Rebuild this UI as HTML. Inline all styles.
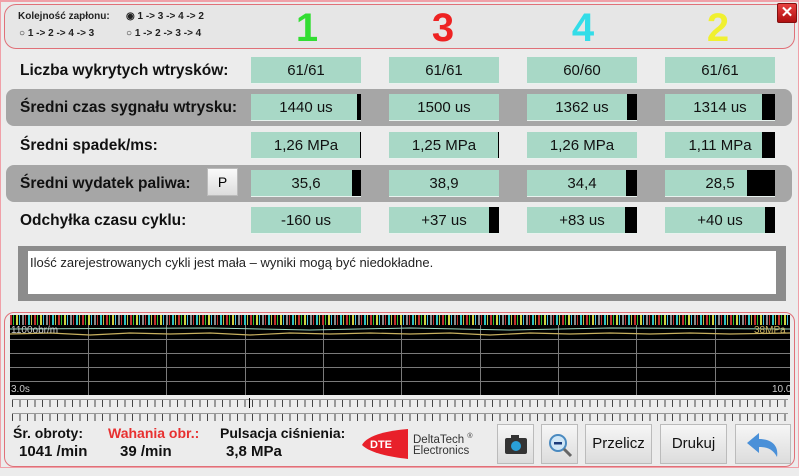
<!DOCTYPE html>
<html><head><meta charset="utf-8"><style>
*{box-sizing:border-box;margin:0;padding:0}
body{width:799px;height:468px;background:#ececec;font-family:"Liberation Sans",sans-serif;position:relative;overflow:hidden}
.a{position:absolute}
.lab{position:absolute;left:20px;font-weight:bold;font-size:15.5px;color:#111;font-family:"Liberation Sans",sans-serif}
.band{position:absolute;left:6px;width:786px;background:#a6a6a6;border-radius:8px}
.box{position:absolute;width:110px;height:27px;background:#a8d8c6;border-bottom:1px solid #e8f2ee;font-size:15px;color:#111;font-family:"Liberation Sans",sans-serif}
.box span{position:absolute;top:5px;left:0;right:0;text-align:center}
.box i{position:absolute;right:0;top:0;bottom:0;background:#000}
.dig{position:absolute;top:6px;font-size:40px;font-weight:bold;font-family:"Liberation Sans",sans-serif;width:40px;text-align:center}
.btn{position:absolute;top:424px;height:40px;background:linear-gradient(#f6f6f6,#dcdcdc);border:1px solid #bbb;font-size:15px;text-align:center;line-height:38px;color:#111;font-family:"Liberation Sans",sans-serif}
.tk{position:absolute;left:12px;width:776px;height:8px;background:repeating-linear-gradient(90deg,#444 0,#444 1px,transparent 1px,transparent 7.5px);border-top:1px solid #999}
.r{position:absolute;font-size:10px;font-weight:bold;color:#222}
</style></head><body>
<div class="a" style="left:0;top:0;width:799px;height:468px;border:1px solid #f0a0a8;border-top:2px solid #f0a0a8"></div>
<div class="a" style="left:4px;top:4px;width:791px;height:45px;border:1px solid #e07078;border-radius:12px;background:#e6e6e6"></div>
<div class="r" style="left:18px;top:11px">Kolejność zapłonu:</div>
<div class="r" style="left:126px;top:11px">◉ 1 -&gt; 3 -&gt; 4 -&gt; 2</div>
<div class="r" style="left:19px;top:28px">○ 1 -&gt; 2 -&gt; 4 -&gt; 3</div>
<div class="r" style="left:126px;top:28px">○ 1 -&gt; 2 -&gt; 3 -&gt; 4</div>
<div class="dig" style="left:287px;color:#33dd33">1</div>
<div class="dig" style="left:423px;color:#ee2222">3</div>
<div class="dig" style="left:563px;color:#33dde8">4</div>
<div class="dig" style="left:698px;color:#f0f030">2</div>
<div class="a" style="left:777px;top:3px;width:20px;height:20px;background:linear-gradient(#e84040,#b01010);border:1px solid #801010;border-radius:2px;color:#fff;font-weight:bold;font-size:15px;text-align:center;line-height:18px">✕</div>

<div class="band" style="top:89px;height:37px"></div>
<div class="band" style="top:165px;height:37px"></div>
<div class="lab" style="top:62px">Liczba wykrytych wtrysków:</div>
<div class="lab" style="top:99px">Średni czas sygnału wtrysku:</div>
<div class="lab" style="top:137px">Średni spadek/ms:</div>
<div class="lab" style="top:175px">Średni wydatek paliwa:</div>
<div class="lab" style="top:212px">Odchyłka czasu cyklu:</div>
<div class="a" style="left:207px;top:168px;width:31px;height:28px;background:linear-gradient(#fafafa,#ddd);border:1px solid #bbb;text-align:center;line-height:26px;font-size:14px">P</div>

<div class="box" style="left:251px;top:57px"><span>61/61</span></div>
<div class="box" style="left:389px;top:57px"><span>61/61</span></div>
<div class="box" style="left:527px;top:57px"><span>60/60</span></div>
<div class="box" style="left:665px;top:57px"><span>61/61</span></div>

<div class="box" style="left:251px;top:94px"><span>1440 us</span><i style="width:4px"></i></div>
<div class="box" style="left:389px;top:94px"><span>1500 us</span></div>
<div class="box" style="left:527px;top:94px"><span>1362 us</span><i style="width:10px"></i></div>
<div class="box" style="left:665px;top:94px"><span>1314 us</span><i style="width:13px"></i></div>

<div class="box" style="left:251px;top:132px"><span>1,26 MPa</span><i style="width:1px"></i></div>
<div class="box" style="left:389px;top:132px"><span>1,25 MPa</span><i style="width:1px"></i></div>
<div class="box" style="left:527px;top:132px"><span>1,26 MPa</span></div>
<div class="box" style="left:665px;top:132px"><span>1,11 MPa</span><i style="width:13px"></i></div>

<div class="box" style="left:251px;top:170px"><span>35,6</span><i style="width:9px"></i></div>
<div class="box" style="left:389px;top:170px"><span>38,9</span></div>
<div class="box" style="left:527px;top:170px"><span>34,4</span><i style="width:11px"></i></div>
<div class="box" style="left:665px;top:170px"><span>28,5</span><i style="width:28px"></i></div>

<div class="box" style="left:251px;top:207px"><span>-160 us</span></div>
<div class="box" style="left:389px;top:207px"><span>+37 us</span><i style="width:10px"></i></div>
<div class="box" style="left:527px;top:207px"><span>+83 us</span><i style="width:12px"></i></div>
<div class="box" style="left:665px;top:207px"><span>+40 us</span><i style="width:10px"></i></div>

<div class="a" style="left:18px;top:246px;width:768px;height:55px;background:#8c8c8c"></div>
<div class="a" style="left:28px;top:251px;width:748px;height:43px;background:#fff;font-size:13px;padding:4px 2px;color:#222">Ilość zarejestrowanych cykli jest mała – wyniki mogą być niedokładne.</div>

<div class="a" style="left:4px;top:312px;width:791px;height:155px;border:1px solid #e07078;border-radius:10px"></div>
<svg class="a" style="left:10px;top:315px" width="780" height="80">
<defs><pattern id="p" width="24" height="10" patternUnits="userSpaceOnUse">
<rect x="0" width="2" height="10" fill="#c03030"/><rect x="3" width="1" height="10" fill="#30c030"/><rect x="6" width="2" height="10" fill="#d0d040"/><rect x="9" width="1" height="10" fill="#40c0e0"/><rect x="12" width="2" height="10" fill="#888"/><rect x="15" width="1" height="10" fill="#c03030"/><rect x="18" width="2" height="10" fill="#30c0c0"/><rect x="21" width="1" height="10" fill="#c0c040"/></pattern></defs>
<rect width="780" height="80" fill="#000"/>
<rect width="780" height="10" fill="url(#p)"/>
<g stroke="#7a7a7a" stroke-width="1">
<line x1="0" y1="24.5" x2="780" y2="24.5"/><line x1="0" y1="38.5" x2="780" y2="38.5"/><line x1="0" y1="52.5" x2="780" y2="52.5"/><line x1="0" y1="66.5" x2="780" y2="66.5"/>
<line x1="78.5" y1="10" x2="78.5" y2="80"/><line x1="156.5" y1="10" x2="156.5" y2="80"/><line x1="235.5" y1="10" x2="235.5" y2="80"/><line x1="313.5" y1="10" x2="313.5" y2="80"/><line x1="391.5" y1="10" x2="391.5" y2="80"/><line x1="470.5" y1="10" x2="470.5" y2="80"/><line x1="548.5" y1="10" x2="548.5" y2="80"/><line x1="626.5" y1="10" x2="626.5" y2="80"/><line x1="705.5" y1="10" x2="705.5" y2="80"/></g>
<polyline points="0,14 200,13 300,15 400,13 500,15 600,13 780,14" fill="none" stroke="#9fd8c0" stroke-width="1"/>
<polyline points="0,19 40,18 80,20 120,18 160,19 200,18 240,20 280,18 320,19 360,18 400,19 440,18 480,20 520,18 560,19 600,18 640,19 680,18 720,19 780,18" fill="none" stroke="#c8b060" stroke-width="1.2"/>
<text x="1" y="18" fill="#ccc" font-size="10" font-family="Liberation Sans">1100obr/m</text>
<text x="744" y="18" fill="#c8b060" font-size="10" font-family="Liberation Sans">38MPa</text>
<text x="1" y="77" fill="#ccc" font-size="10" font-family="Liberation Sans">3.0s</text>
<text x="762" y="77" fill="#ccc" font-size="10" font-family="Liberation Sans">10.0s</text>
</svg>
<div class="tk" style="top:399px"></div>
<div class="a" style="left:249px;top:398px;width:1px;height:10px;background:#000"></div>
<div class="tk" style="top:413px"></div>

<div class="a" style="left:13px;top:425px;font-weight:bold;font-size:14px;color:#111">Śr. obroty:</div>
<div class="a" style="left:108px;top:425px;font-weight:bold;font-size:14px;color:#e83030">Wahania obr.:</div>
<div class="a" style="left:220px;top:425px;font-weight:bold;font-size:14px;color:#111">Pulsacja ciśnienia:</div>
<div class="a" style="left:19px;top:443px;font-weight:bold;font-size:15px;color:#111">1041 /min</div>
<div class="a" style="left:120px;top:443px;font-weight:bold;font-size:15px;color:#111">39 /min</div>
<div class="a" style="left:226px;top:443px;font-weight:bold;font-size:15px;color:#111">3,8 MPa</div>

<svg class="a" style="left:360px;top:423px" width="50" height="40"><path d="M2,22 C6,14 22,8 48,6 L48,36 C30,34 10,30 2,22Z" fill="#e8202a"/><text x="10" y="25" fill="#fff" font-size="11" font-weight="bold" font-family="Liberation Sans">DTE</text></svg>
<div class="a" style="left:413px;top:431px;font-size:11.5px;line-height:11px;color:#333">DeltaTech <sup style="font-size:7px">®</sup><br>Electronics</div>

<div class="btn" style="left:497px;width:37px"><svg width="30" height="26" style="margin-top:7px"><rect x="4" y="6" width="22" height="16" rx="2" fill="#333"/><rect x="10" y="3" width="8" height="4" fill="#333"/><circle cx="15" cy="14" r="5" fill="#2aa0d8"/></svg></div>
<div class="btn" style="left:541px;width:37px"><svg width="30" height="30" style="margin-top:5px"><circle cx="13" cy="13" r="8" fill="#cfe6f6" stroke="#4a8ac0" stroke-width="2"/><rect x="9" y="12" width="8" height="2.5" fill="#1a3a7a"/><line x1="19" y1="19" x2="26" y2="26" stroke="#666" stroke-width="3"/></svg></div>
<div class="btn" style="left:585px;width:67px">Przelicz</div>
<div class="btn" style="left:660px;width:67px">Drukuj</div>
<div class="btn" style="left:735px;width:56px"><svg width="40" height="32" style="margin-top:4px"><path d="M4,14 L16,4 L16,10 C28,10 36,16 34,28 C30,20 24,18 16,18 L16,24 Z" fill="#4a90d8"/></svg></div>
</body></html>
